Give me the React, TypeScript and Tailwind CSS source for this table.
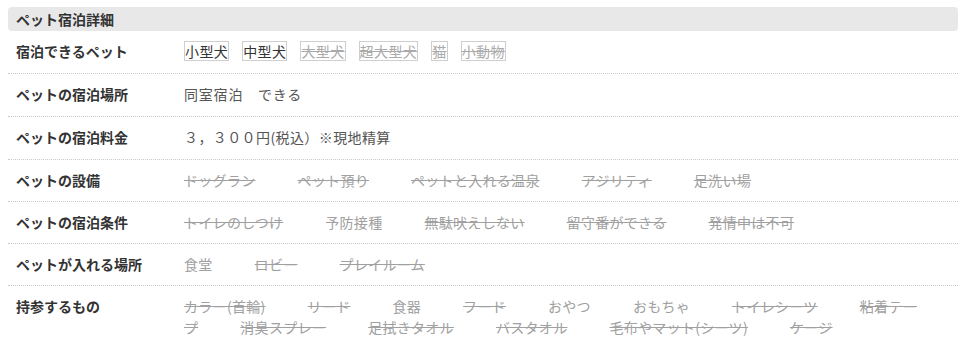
import React from "react";

type Item = { t: string; s?: boolean };

const font = { fontFamily: '"Noto Sans CJK JP", "Noto Sans", sans-serif' };

const pets: Item[] = [
  { t: "小型犬" },
  { t: "中型犬" },
  { t: "大型犬", s: true },
  { t: "超大型犬", s: true },
  { t: "猫", s: true },
  { t: "小動物", s: true },
];

const lists: { label: string; items: Item[]; compact?: boolean }[] = [
  {
    label: "ペットの設備",
    compact: true,
    items: [
      { t: "ドッグラン", s: true },
      { t: "ペット預り", s: true },
      { t: "ペットと入れる温泉", s: true },
      { t: "アジリティ", s: true },
      { t: "足洗い場", s: true },
    ],
  },
  {
    label: "ペットの宿泊条件",
    compact: true,
    items: [
      { t: "トイレのしつけ", s: true },
      { t: "予防接種" },
      { t: "無駄吠えしない", s: true },
      { t: "留守番ができる", s: true },
      { t: "発情中は不可", s: true },
    ],
  },
  {
    label: "ペットが入れる場所",
    compact: true,
    items: [
      { t: "食堂" },
      { t: "ロビー", s: true },
      { t: "プレイルーム", s: true },
    ],
  },
  {
    label: "持参するもの",
    items: [
      { t: "カラー(首輪)", s: true },
      { t: "リード", s: true },
      { t: "食器" },
      { t: "フード", s: true },
      { t: "おやつ" },
      { t: "おもちゃ" },
      { t: "トイレシーツ", s: true },
      { t: "粘着テープ", s: true },
      { t: "消臭スプレー", s: true },
      { t: "足拭きタオル", s: true },
      { t: "バスタオル", s: true },
      { t: "毛布やマット(シーツ)", s: true },
      { t: "ケージ", s: true },
    ],
  },
];

function Row({
  label,
  compact,
  children,
}: {
  label: string;
  compact?: boolean;
  children: React.ReactNode;
}) {
  return (
    <div
      className={
        "flex border-b border-dotted border-[#c8c8c8] last:border-b-0 pt-[10px] leading-[21px] " +
        (compact ? "pb-[10px]" : "pb-[11px]")
      }
    >
      <div className="w-[176px] shrink-0 pl-[8px] font-bold text-[#333]">{label}</div>
      <div className="flex-1 pr-[40px]">{children}</div>
    </div>
  );
}

export default function App() {
  return (
    <div className="bg-white w-[972px] h-[351px] pt-[7px] px-[8px] text-[14px]" style={font}>
      <div className="w-[950px]">
        <div className="h-[24px] rounded-[4px] bg-[#e8e8e8] pl-[8px] leading-[24px] font-bold text-[#333]">
          ペット宿泊詳細
        </div>
        <Row label="宿泊できるペット">
          <div className="flex gap-[13px]">
            {pets.map((p) => (
              <span
                key={p.t}
                className={
                  "inline-block border border-[#cfcfcf] leading-[18px] tracking-[0.4px] " +
                  (p.s ? "text-[#aaa] line-through" : "text-[#333]")
                }
              >
                {p.t}
              </span>
            ))}
          </div>
        </Row>
        <Row label="ペットの宿泊場所">
          <span className="text-[#555] tracking-[0.8px]">同室宿泊　できる</span>
        </Row>
        <Row label="ペットの宿泊料金">
          <span className="text-[#555] tracking-[0.4px]">３，３００円(税込）※現地精算</span>
        </Row>
        {lists.map((r) => (
          <Row key={r.label} label={r.label} compact={r.compact}>
            <div className="text-[#a0a0a0] tracking-[0.3px]">
              {r.items.map((it) => (
                <span key={it.t} className={"mr-[42px] " + (it.s ? "line-through" : "")}>
                  {it.t}
                </span>
              ))}
            </div>
          </Row>
        ))}
      </div>
    </div>
  );
}
